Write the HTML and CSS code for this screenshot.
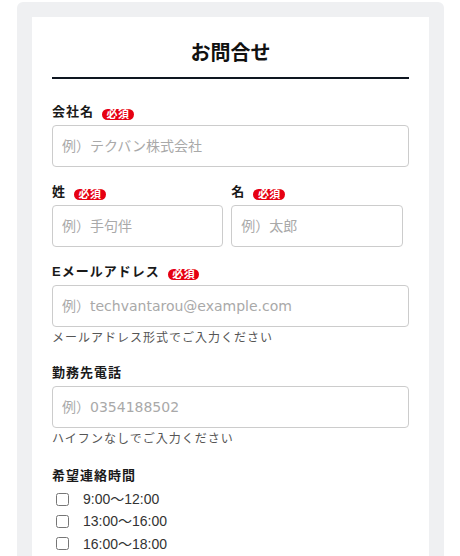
FILE: index.html
```html
<!DOCTYPE html>
<html lang="ja">
<head>
<meta charset="utf-8">
<title>お問合せ</title>
<link rel="stylesheet" href="styles.css">
</head>
<body>
<div class="page">
  <div class="panel">
    <form class="card">
      <h1 class="title">お問合せ</h1>

      <div class="field">
        <label class="label">会社名<span class="req">必須</span></label>
        <input class="input" type="text" placeholder="例）テクバン株式会社">
      </div>

      <div class="row">
        <div class="field col">
          <label class="label">姓<span class="req">必須</span></label>
          <input class="input" type="text" placeholder="例）手句伴">
        </div>
        <div class="field col">
          <label class="label">名<span class="req">必須</span></label>
          <input class="input" type="text" placeholder="例）太郎">
        </div>
      </div>

      <div class="field">
        <label class="label">Eメールアドレス<span class="req">必須</span></label>
        <input class="input" type="email" placeholder="例）techvantarou@example.com">
        <p class="hint">メールアドレス形式でご入力ください</p>
      </div>

      <div class="field">
        <label class="label">勤務先電話</label>
        <input class="input" type="tel" placeholder="例）0354188502">
        <p class="hint">ハイフンなしでご入力ください</p>
      </div>

      <div class="field field-times">
        <span class="label">希望連絡時間</span>
        <label class="check"><input type="checkbox" class="box"><span class="check-text">9:00〜12:00</span></label>
        <label class="check"><input type="checkbox" class="box"><span class="check-text">13:00〜16:00</span></label>
        <label class="check"><input type="checkbox" class="box"><span class="check-text">16:00〜18:00</span></label>
      </div>
    </form>
  </div>
</div>
</body>
</html>
```

FILE: styles.css
```css
html, body {
  margin: 0;
  padding: 0;
  background: #ffffff;
}

body {
  font-family: "Liberation Sans", "Noto Sans CJK JP", sans-serif;
  color: #222222;
}

.page {
  padding: 2px 16px 0 17px;
}

.panel {
  background: #eff0f2;
  border-radius: 6px 6px 0 0;
  padding: 15px 15px 0 15px;
}

.card {
  background: #ffffff;
  padding: 21px 20px 20px 20px;
  display: flex;
  flex-direction: column;
}

.title {
  margin: 0;
  padding: 0 0 9px 0;
  border-bottom: 2px solid #0e1620;
  font-size: 20px;
  line-height: 30px;
  font-weight: bold;
  text-align: center;
  color: #111111;
}

.field {
  display: flex;
  flex-direction: column;
  margin-top: 15px;
}

.title + .field {
  margin-top: 23px;
}

.row {
  display: flex;
  gap: 8px;
}

.row .col {
  width: 48%;
}

.label {
  display: block;
  font-size: 13px;
  line-height: 20px;
  font-weight: bold;
  letter-spacing: 1px;
  color: #1a1a1a;
  margin-bottom: 3px;
}

.req {
  display: inline-block;
  margin-left: 8px;
  padding: 0 4px 0 4.5px;
  background: #e60012;
  color: #ffffff;
  border-radius: 6px;
  font-size: 11px;
  line-height: 11px;
  letter-spacing: 0.5px;
  font-weight: bold;
  vertical-align: -2px;
}

.input {
  box-sizing: border-box;
  width: 100%;
  height: 42px;
  margin: 0;
  padding: 0 9px;
  border: 1px solid #cccccc;
  border-radius: 4px;
  font-family: "DejaVu Sans", "Noto Sans CJK JP", sans-serif;
  font-size: 14px;
  color: #222222;
  background: #ffffff;
  outline: none;
}

.input::placeholder {
  color: #a9a9a9;
}

.hint {
  margin: 2px 0 0 0;
  font-size: 12px;
  line-height: 19px;
  letter-spacing: 1px;
  color: #555555;
}

.field-times {
  margin-top: 17px;
}

.field-times .label {
  margin-bottom: 2px;
}

.check {
  display: flex;
  align-items: center;
  height: 22.4px;
  font-size: 14px;
  color: #333333;
}

.box {
  margin: 0 0 0 4px;
  width: 13px;
  height: 13px;
}

.check-text {
  margin-left: 14px;
  line-height: 22.4px;
}
```
